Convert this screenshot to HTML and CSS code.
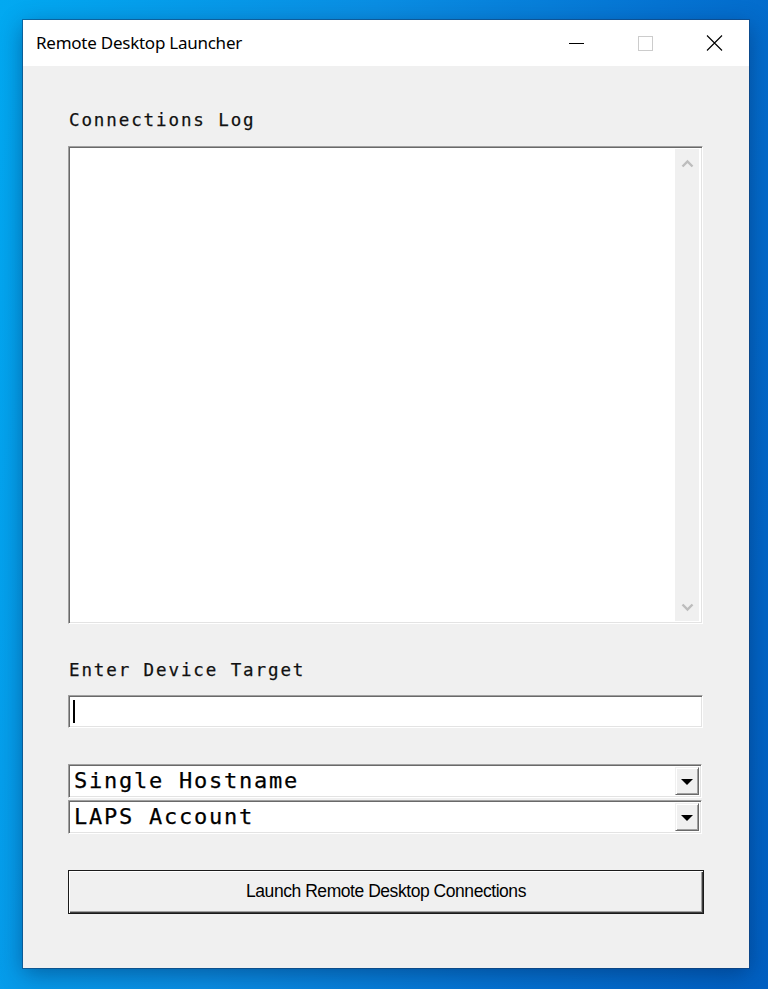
FILE: index.html
```html
<!DOCTYPE html>
<html>
<head>
<meta charset="utf-8">
<title>Remote Desktop Launcher</title>
<link rel="stylesheet" href="styles.css">
</head>
<body>
<div class="desktop">
  <div class="window">
    <div class="titlebar">
      <div class="title">Remote Desktop Launcher</div>
      <div class="controls">
        <div class="ctl"><span class="min"></span></div>
        <div class="ctl"><span class="max"></span></div>
        <div class="ctl">
          <svg width="17" height="16" viewBox="0 0 17 16"><path d="M1 0.5 L16 15.5 M16 0.5 L1 15.5" stroke="#000" stroke-width="1.1" fill="none"/></svg>
        </div>
      </div>
    </div>
    <div class="content">
      <div class="label">Connections Log</div>
      <div class="logbox sunken">
        <div class="logarea"></div>
        <div class="scrollbar">
          <svg class="arrow" width="13" height="9" viewBox="0 0 13 9"><path d="M1.5 7.5 L6.5 2.5 L11.5 7.5" stroke="#bdbdbd" stroke-width="2.4" fill="none"/></svg>
          <svg class="arrow" width="13" height="9" viewBox="0 0 13 9"><path d="M1.5 1.5 L6.5 6.5 L11.5 1.5" stroke="#bdbdbd" stroke-width="2.4" fill="none"/></svg>
        </div>
      </div>
      <div class="label label2">Enter Device Target</div>
      <div class="textbox sunken"><span class="caret"></span></div>
      <div class="combos">
        <div class="combo sunken">
          <span class="combo-text">Single Hostname</span>
          <span class="dropbtn"><span class="tri"></span></span>
        </div>
        <div class="combo sunken">
          <span class="combo-text">LAPS Account</span>
          <span class="dropbtn"><span class="tri"></span></span>
        </div>
      </div>
      <div class="button">Launch Remote Desktop Connections</div>
    </div>
  </div>
</div>
</body>
</html>
```
FILE: styles.css
```css
* { box-sizing: border-box; }
html, body { margin: 0; padding: 0; }
body {
  width: 768px;
  height: 989px;
  overflow: hidden;
  background: linear-gradient(100deg, #02a9f1 0%, #0a8ee3 40%, #0574d3 70%, #0160c2 100%);
  font-family: "Noto Sans", "DejaVu Sans", sans-serif;
}
.desktop {
  padding: 20px 19px 21px 23px;
}
.window {
  width: 726px;
  height: 948px;
  background: #f0f0f0;
  display: flex;
  flex-direction: column;
  box-shadow: 0 0 0 1px rgba(20, 60, 110, 0.55), 0 6px 22px rgba(0, 30, 80, 0.45);
}
.titlebar {
  height: 46px;
  background: #fff;
  display: flex;
  align-items: center;
  justify-content: space-between;
}
.title {
  padding-left: 13px;
  font-size: 17px;
  color: #000;
  letter-spacing: -0.25px;
  padding-bottom: 1px;
}
.controls {
  display: flex;
  height: 46px;
}
.ctl {
  width: 69px;
  height: 46px;
  display: flex;
  align-items: center;
  justify-content: center;
}
.min {
  display: block;
  width: 15px;
  height: 1px;
  background: #000;
}
.max {
  display: block;
  width: 15px;
  height: 15px;
  border: 1px solid #cccccc;
}
.content {
  flex: 1;
  padding: 44px 0 0 45px;
  display: flex;
  flex-direction: column;
}
.label {
  font-family: "DejaVu Sans Mono", monospace;
  font-size: 17.5px;
  line-height: 20px;
  letter-spacing: 1.9px;
  color: #111;
  margin-left: 1px;
  height: 20px;
  -webkit-text-stroke: 0.25px #111;
}
.sunken {
  border: 1px solid;
  border-color: #a0a0a0 #ffffff #ffffff #a0a0a0;
  box-shadow: inset 1px 1px 0 #696969, inset -1px -1px 0 #e3e3e3;
}
.logbox {
  margin-top: 16px;
  width: 635px;
  height: 478px;
  background: #fff;
  display: flex;
  padding: 2px;
}
.logarea {
  flex: 1;
}
.scrollbar {
  width: 24px;
  margin-right: 1px;
  background: #f0f0f0;
  display: flex;
  flex-direction: column;
  justify-content: space-between;
  align-items: center;
  padding: 10px 0 9px 0;
}
.label2 {
  margin-top: 36px;
}
.textbox {
  margin-top: 15px;
  width: 635px;
  height: 33px;
  background: #fff;
  padding: 4px 0 0 4px;
}
.caret {
  display: block;
  width: 2px;
  height: 23px;
  background: #000;
}
.combos {
  margin-top: 36px;
  display: flex;
  flex-direction: column;
  gap: 2px;
}
.combo {
  width: 634px;
  height: 34px;
  background: #fff;
  display: flex;
  align-items: center;
  justify-content: space-between;
  padding: 2px;
}
.combo-text {
  font-family: "DejaVu Sans Mono", monospace;
  font-size: 22px;
  letter-spacing: 1.75px;
  color: #000;
  padding-left: 3px;
  line-height: 28px;
  -webkit-text-stroke: 0.25px #000;
}
.dropbtn {
  width: 24px;
  height: 28px;
  background: #f0f0f0;
  border: 1px solid;
  border-color: #f0f0f0 #696969 #696969 #f0f0f0;
  box-shadow: inset 1px 1px 0 #ffffff, inset -1px -1px 0 #a0a0a0;
  display: flex;
  align-items: center;
  justify-content: center;
}
.tri {
  display: block;
  width: 0;
  height: 0;
  border-left: 6px solid transparent;
  border-right: 6px solid transparent;
  border-top: 6px solid #000;
  margin-top: 2px;
}
.button {
  margin-top: 36px;
  width: 636px;
  height: 44px;
  background: #f0f0f0;
  border: 1px solid #1a1a1a;
  box-shadow: inset 1px 1px 0 #ffffff, inset -1px -1px 0 #3c3c3c, inset -2px -2px 0 #a0a0a0;
  display: flex;
  align-items: center;
  justify-content: center;
  font-family: "Liberation Sans", Arial, sans-serif;
  font-size: 17.5px;
  letter-spacing: -0.45px;
  color: #000;
  padding-bottom: 1px;
}
```
